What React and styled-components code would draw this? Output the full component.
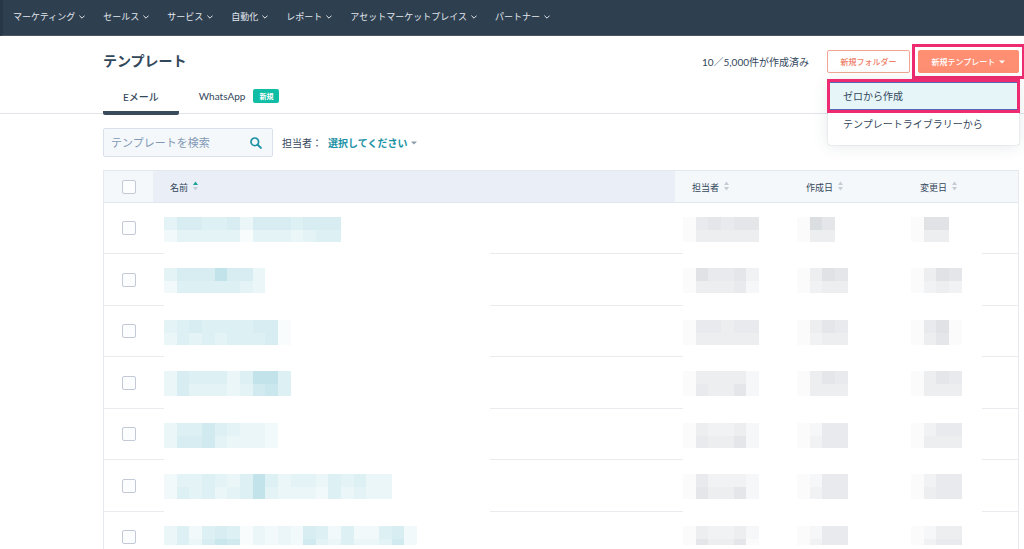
import React from "react"
import styled, { createGlobalStyle } from "styled-components"

const GlobalStyle = createGlobalStyle`
  * {
    box-sizing: border-box;
  }

  html {
    scrollbar-width: none;
  }

  body {
    margin: 0;
    background: #ffffff;
    color: #33475b;
    font-family: Lato, "Noto Sans CJK JP", sans-serif;
    font-size: 10px;
    line-height: 16px;
  }

  button, input {
    font-family: inherit;
  }
`

const NavBar = styled.nav`
  display: flex;
  align-items: center;
  gap: 18px;
  height: 36px;
  padding: 0 10px 2px;
  background: #2e3f50;
  border-left: 3px solid #273747;
  border-bottom: 1px solid #4a5560;
`

const NavButton = styled.button`
  display: flex;
  align-items: center;
  gap: 4px;
  padding: 0;
  border: 0;
  background: none;
  color: #e3e8ee;
  font-size: 9px;
  line-height: 16px;
  white-space: nowrap;
`

const Header = styled.header`
  display: flex;
  align-items: center;
  padding: 14px 5px 0 103px;
`

const Title = styled.h1`
  flex: 1;
  margin: 0;
  padding-bottom: 2px;
  font-size: 14px;
  font-weight: 600;
  line-height: 20px;
`

const Usage = styled.span`
  margin-right: 18px;
`

const Button = styled.button`
  display: flex;
  align-items: center;
  justify-content: center;
  gap: 4px;
  width: ${props => (props.$primary ? "101px" : "83px")};
  height: 23px;
  padding: 0;
  border: 1px solid ${props => (props.$primary ? "#ff8f73" : "#f0a693")};
  border-radius: 2px;
  background: ${props => (props.$primary ? "#ff8f73" : "#ffffff")};
  color: ${props => (props.$primary ? "#ffffff" : "#ee8068")};
  font-size: 8px;
  font-weight: 500;
`

const MenuAnchor = styled.div`
  position: relative;
  margin-left: 8px;
  outline: 3px solid #ee2a70;
  outline-offset: 3px;
`

const Menu = styled.div`
  position: absolute;
  z-index: 2;
  top: 30px;
  right: 0;
  width: 191px;
  padding-bottom: 9px;
  border-radius: 2px;
  background: #ffffff;
  box-shadow: 0 1px 16px rgba(45, 62, 80, 0.12),
    0 0 1px rgba(45, 62, 80, 0.5);
`

const MenuItem = styled.button`
  display: block;
  width: 100%;
  padding: 4px 15px;
  border: 0;
  background: #ffffff;
  color: #33475b;
  font-size: 10px;
  line-height: 16px;
  text-align: left;

  &:first-child {
    padding: 8px 15px;
    background: #e5f5f8;
    box-shadow: inset 0 3px #5568b8, inset 0 -3px #5568b8;
    outline: 3px solid #ee2a70;
    outline-offset: -2px;
  }
`

const Tabs = styled.div`
  display: flex;
  height: 41px;
  padding-left: 103px;
  border-bottom: 1px solid #e1e5ea;
`

const Tab = styled.button`
  display: flex;
  align-items: center;
  gap: 8px;
  height: 42px;
  padding: 8px 20px 0;
  border: 0;
  border-bottom: 4px solid
    ${props => (props.$active ? "#3b4b5e" : "transparent")};
  border-radius: 2px;
  background: none;
  color: #33475b;
  font-size: 10px;
  font-weight: ${props => (props.$active ? 500 : 400)};
`

const Badge = styled.span`
  padding: 0 6px;
  border-radius: 2px;
  background: #10bda5;
  color: #ffffff;
  font-size: 7px;
  font-weight: 700;
  line-height: 14px;
`

const Toolbar = styled.div`
  display: flex;
  align-items: center;
  gap: 9px;
  padding: 14px 5px 13px 103px;
`

const Search = styled.label`
  display: flex;
  align-items: center;
  width: 170px;
  height: 29px;
  padding: 0 10px 0 7px;
  border: 1px solid #dbe1ea;
  border-radius: 2px;
  background: #f5f8fa;

  input {
    flex: 1;
    min-width: 0;
    padding: 0;
    border: 0;
    outline: 0;
    background: none;
    color: #33475b;
    font-size: 11px;
    line-height: 16px;
  }

  input::placeholder {
    color: #8299b5;
    opacity: 1;
  }
`

const Filter = styled.div`
  display: flex;
  align-items: center;
  gap: 6px;
`

const FilterButton = styled.button`
  display: flex;
  align-items: center;
  gap: 4px;
  padding: 0;
  border: 0;
  background: none;
  color: #1c92a5;
  font-size: 10px;
  font-weight: 700;
  line-height: 16px;
`

const TableWrap = styled.div`
  padding: 0 5px 0 103px;
`

const Table = styled.table`
  width: 100%;
  border: 1px solid #e5e9ee;
  border-width: 0 1px;
  border-spacing: 0;
  table-layout: fixed;
`

const HeadCell = styled.th`
  width: ${props => props.$width};
  height: 33px;
  padding: ${props => (props.$check ? "0" : "2px 0 0 17px")};
  border-top: 1px solid #e3e8ef;
  border-bottom: 1px solid #e1e7ef;
  background: ${props => (props.$sorted ? "#eaeff7" : "#f5f8fb")};
  font-size: 9px;
  font-weight: 400;
  text-align: ${props => (props.$check ? "center" : "left")};
`

const SortButton = styled.button`
  display: flex;
  align-items: center;
  gap: 5px;
  padding: 0;
  border: 0;
  background: none;
  color: #33475b;
  font-size: 9px;
  line-height: 16px;

  svg {
    margin-bottom: 4px;
  }
`

const Row = styled.tr`
  height: 51px;

  &:nth-child(even) {
    height: 52px;
  }
`

const line = "linear-gradient(#e9ebee, #e9ebee)"

// the row line stops where the masked area begins
const Cell = styled.td`
  padding: ${props => props.$padding || "14px 0 0 8px"};
  background: ${line} left bottom / ${props => props.$left || "0"} 1px
      no-repeat,
    ${line} right bottom / ${props => props.$right || "0"} 1px no-repeat;
  text-align: ${props => (props.$check ? "center" : "left")};
  vertical-align: ${props => (props.$check ? "middle" : "top")};

  svg {
    display: block;
  }
`

const Checkbox = styled.input`
  display: inline-block;
  width: 14px;
  height: 14px;
  margin: 0;
  appearance: none;
  border: 1px solid #c3cad5;
  border-radius: 2px;
  background: #fcfdff;
  vertical-align: middle;
`

const Chevron = () => (
  <svg width="6" height="4" viewBox="0 0 6 4" fill="none">
    <path d="M.4.6 3 3.2 5.6.6" stroke="#e3e8ee" strokeWidth="1" />
  </svg>
)

const Caret = ({ color }) => (
  <svg width="6" height="4" viewBox="0 0 6 4">
    <path d="M0 .4h6L3 3.6z" fill={color} />
  </svg>
)

const SortArrows = ({ active }) => (
  <svg width="5" height="10" viewBox="0 0 5 10">
    <path d="M0 4h5L2.5.6z" fill={active ? "#17a398" : "#c5ccd6"} />
    <path d="M0 6h5L2.5 9.4z" fill="#c5ccd6" />
  </svg>
)

const SearchIcon = () => (
  <svg width="12" height="12" viewBox="0 0 12 12" fill="none">
    <circle cx="4.8" cy="4.8" r="3.8" stroke="#1c92a5" strokeWidth="1.7" />
    <path
      d="m7.7 7.7 3.2 3.2"
      stroke="#1c92a5"
      strokeWidth="2"
      strokeLinecap="round"
    />
  </svg>
)

const TILE = 12.65

// each digit is the strength of one tile
const Mosaic = ({ tiles, teal, height = 26 }) => (
  <svg
    width={Math.ceil(tiles[0].length * TILE)}
    height={height}
    shapeRendering="crispEdges"
    aria-hidden="true"
  >
    {tiles.map((strip, y) =>
      [...strip].map((level, x) => (
        <rect
          key={`${x}-${y}`}
          x={x * TILE}
          y={y * TILE}
          width={TILE}
          height={TILE}
          fill={teal ? "#8fccd8" : "#8f97a3"}
          opacity={level * (teal ? 0.06 : 0.04)}
        />
      )),
    )}
  </svg>
)

const menus = [
  "マーケティング",
  "セールス",
  "サービス",
  "自動化",
  "レポート",
  "アセットマーケットプレイス",
  "パートナー",
]

const columns = [
  { label: "担当者", width: "114px" },
  { label: "作成日", width: "114px" },
  { label: "変更日", width: "115px" },
]

const rows = [
  {
    name: ["46655636665666", "24444414443455"],
    owner: ["1565660", "1444440"],
    created: ["186", "144"],
    updated: ["177", "144"],
  },
  {
    name: ["46669663", "25555543"],
    owner: ["175563", "144452"],
    created: ["1476", "1344"],
    updated: ["1476", "1343"],
  },
  {
    name: ["4565555661", "3545455561"],
    owner: ["155455", "144444"],
    created: ["1465", "1344"],
    updated: ["1571", "1461"],
  },
  {
    name: ["3655535995", "3644434785"],
    owner: ["144442", "154462"],
    created: ["1465", "1444"],
    updated: ["1465", "1444"],
  },
  {
    name: ["355754332", "366743332"],
    owner: ["143342", "154462"],
    created: ["1255", "1355"],
    updated: ["1355", "1444"],
  },
  {
    name: ["244543595344354533", "254534594333253433"],
    owner: ["153332", "164462"],
    created: ["1255", "1355"],
    updated: ["1355", "1455"],
  },
  {
    name: ["35256513232652522562", "35368713232743533472"],
    owner: ["143342", "164461"],
    created: ["1255", "1355"],
    updated: ["1244", "1355"],
    height: 19,
  },
]

const App = () => (
  <>
    <GlobalStyle />
    <NavBar>
      {menus.map(menu => (
        <NavButton key={menu}>
          {menu}
          <Chevron />
        </NavButton>
      ))}
    </NavBar>
    <Header>
      <Title>テンプレート</Title>
      <Usage>10／5,000件が作成済み</Usage>
      <Button>新規フォルダー</Button>
      <MenuAnchor>
        <Button $primary>
          新規テンプレート
          <Caret color="#ffffff" />
        </Button>
        <Menu>
          <MenuItem>ゼロから作成</MenuItem>
          <MenuItem>テンプレートライブラリーから</MenuItem>
        </Menu>
      </MenuAnchor>
    </Header>
    <Tabs>
      <Tab $active>Eメール</Tab>
      <Tab>
        WhatsApp
        <Badge>新規</Badge>
      </Tab>
    </Tabs>
    <Toolbar>
      <Search>
        <input
          type="text"
          placeholder="テンプレートを検索"
          aria-label="テンプレートを検索"
        />
        <SearchIcon />
      </Search>
      <Filter>
        <span>担当者：</span>
        <FilterButton>
          選択してください
          <Caret color="#8b9bab" />
        </FilterButton>
      </Filter>
    </Toolbar>
    <TableWrap>
      <Table>
        <thead>
          <tr>
            <HeadCell $width="49px" $check>
              <Checkbox type="checkbox" aria-label="すべて選択" />
            </HeadCell>
            <HeadCell $sorted>
              <SortButton>
                名前
                <SortArrows active />
              </SortButton>
            </HeadCell>
            {columns.map(({ label, width }) => (
              <HeadCell key={label} $width={width}>
                <SortButton>
                  {label}
                  <SortArrows />
                </SortButton>
              </HeadCell>
            ))}
          </tr>
        </thead>
        <tbody>
          {rows.map((row, index) => (
            <Row key={index}>
              <Cell $check $padding="0 0 3px" $left="100%">
                <Checkbox type="checkbox" aria-label={`${index + 1}行目を選択`} />
              </Cell>
              <Cell
                $padding="14px 0 0 11px"
                $left="11px"
                $right="calc(100% - 337px)"
              >
                <Mosaic tiles={row.name} height={row.height} teal />
              </Cell>
              <Cell $left="8px">
                <Mosaic tiles={row.owner} height={row.height} />
              </Cell>
              <Cell>
                <Mosaic tiles={row.created} height={row.height} />
              </Cell>
              <Cell $right="36px">
                <Mosaic tiles={row.updated} height={row.height} />
              </Cell>
            </Row>
          ))}
        </tbody>
      </Table>
    </TableWrap>
  </>
)

export default App
